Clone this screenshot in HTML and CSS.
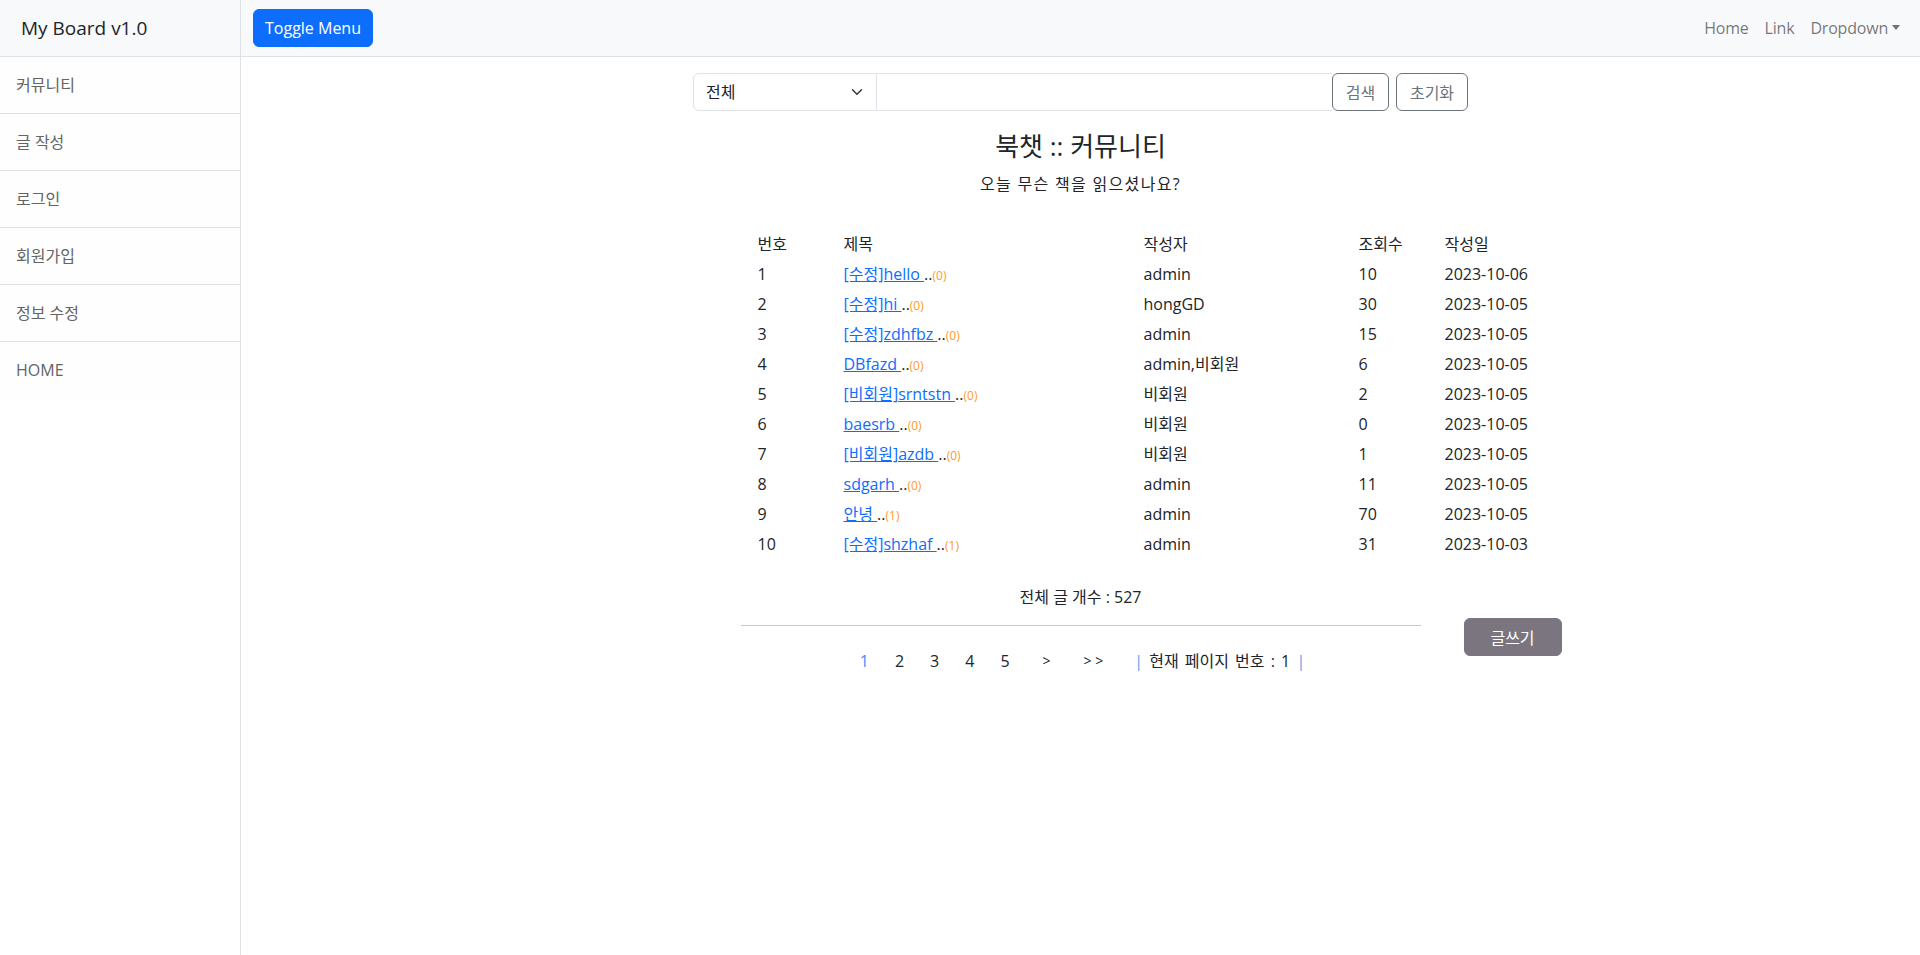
FILE: index.html
```html
<!DOCTYPE html>
<html lang="ko">
<head>
<meta charset="utf-8">
<title>My Board v1.0</title>
<link rel="stylesheet" href="styles.css">
</head>
<body>
<div class="wrapper">
  <aside class="sidebar">
    <div class="sidebar-heading">My Board v1.0</div>
    <div class="list-group">
      <a class="list-item" href="#">커뮤니티</a>
      <a class="list-item" href="#">글 작성</a>
      <a class="list-item" href="#">로그인</a>
      <a class="list-item" href="#">회원가입</a>
      <a class="list-item" href="#">정보 수정</a>
      <a class="list-item" href="#">HOME</a>
    </div>
  </aside>
  <div class="page">
    <nav class="navbar">
      <button class="btn-toggle" type="button">Toggle Menu</button>
      <ul class="nav">
        <li><a class="nav-link" href="#">Home</a></li>
        <li><a class="nav-link" href="#">Link</a></li>
        <li><a class="nav-link dropdown" href="#">Dropdown</a></li>
      </ul>
    </nav>
    <main class="content">
      <form class="search">
        <span class="select-wrap">
          <select class="select"><option>전체</option></select>
          <svg class="chevron" width="16" height="12" viewBox="0 0 16 16"><path d="m2 5 6 6 6-6" fill="none" stroke="#343a40" stroke-width="2" stroke-linecap="round" stroke-linejoin="round"/></svg>
        </span>
        <input class="keyword" type="text">
        <button class="btn-outline" type="button">검색</button>
        <button class="btn-outline reset" type="button">초기화</button>
      </form>
      <h3 class="title">북챗 :: 커뮤니티</h3>
      <p class="subtitle">오늘 무슨 책을 읽으셨나요?</p>
      <div class="board">
        <table class="table">
          <colgroup>
            <col class="c-no"><col class="c-title"><col class="c-writer"><col class="c-hit"><col class="c-date">
          </colgroup>
          <thead>
            <tr><th>번호</th><th>제목</th><th>작성자</th><th>조회수</th><th>작성일</th></tr>
          </thead>
          <tbody>
            <tr><td>1</td><td><a href="#">[수정]hello </a>..<span class="cnt">(0)</span></td><td>admin</td><td>10</td><td>2023-10-06</td></tr>
            <tr><td>2</td><td><a href="#">[수정]hi </a>..<span class="cnt">(0)</span></td><td>hongGD</td><td>30</td><td>2023-10-05</td></tr>
            <tr><td>3</td><td><a href="#">[수정]zdhfbz </a>..<span class="cnt">(0)</span></td><td>admin</td><td>15</td><td>2023-10-05</td></tr>
            <tr><td>4</td><td><a href="#">DBfazd </a>..<span class="cnt">(0)</span></td><td>admin,비회원</td><td>6</td><td>2023-10-05</td></tr>
            <tr><td>5</td><td><a href="#">[비회원]srntstn </a>..<span class="cnt">(0)</span></td><td>비회원</td><td>2</td><td>2023-10-05</td></tr>
            <tr><td>6</td><td><a href="#">baesrb </a>..<span class="cnt">(0)</span></td><td>비회원</td><td>0</td><td>2023-10-05</td></tr>
            <tr><td>7</td><td><a href="#">[비회원]azdb </a>..<span class="cnt">(0)</span></td><td>비회원</td><td>1</td><td>2023-10-05</td></tr>
            <tr><td>8</td><td><a href="#">sdgarh </a>..<span class="cnt">(0)</span></td><td>admin</td><td>11</td><td>2023-10-05</td></tr>
            <tr><td>9</td><td><a href="#">안녕 </a>..<span class="cnt">(1)</span></td><td>admin</td><td>70</td><td>2023-10-05</td></tr>
            <tr><td>10</td><td><a href="#">[수정]shzhaf </a>..<span class="cnt">(1)</span></td><td>admin</td><td>31</td><td>2023-10-03</td></tr>
          </tbody>
        </table>
        <p class="total">전체 글 개수 : 527</p>
      </div>
      <div class="footer-row">
        <div class="footer-mid">
          <hr class="divider">
          <div class="pagination">
            <a class="page-num current" href="#">1</a>
            <a class="page-num" href="#">2</a>
            <a class="page-num" href="#">3</a>
            <a class="page-num" href="#">4</a>
            <a class="page-num" href="#">5</a>
            <a class="page-arrow" href="#">&gt;</a>
            <a class="page-arrow" href="#">&gt; &gt;</a>
            <span class="page-status"><span class="bar">|</span> 현재 페이지 번호 : 1 <span class="bar">|</span></span>
          </div>
        </div>
        <div class="footer-side">
          <button class="btn-write" type="button">글쓰기</button>
        </div>
      </div>
    </main>
  </div>
</div>
</body>
</html>
```
FILE: styles.css
```css
* { box-sizing: border-box; }

html, body {
  margin: 0;
  padding: 0;
}

body {
  font-family: "Open Sans", "Noto Sans CJK KR", sans-serif;
  font-size: 16px;
  line-height: 1.5;
  color: #212529;
  background: #fff;
}

.wrapper {
  display: flex;
  min-height: 955px;
}

/* Sidebar */
.sidebar {
  width: 241px;
  flex: 0 0 241px;
  border-right: 1px solid #dee2e6;
  background: #fff;
}

.sidebar-heading {
  height: 57px;
  padding: 0 21px;
  display: flex;
  align-items: center;
  font-size: 19px;
  background: #f8f9fa;
  border-bottom: 1px solid #dee2e6;
  color: #212529;
}

.list-group {
  display: flex;
  flex-direction: column;
}

.list-item {
  display: block;
  height: 57px;
  padding: 16px 16px;
  line-height: 24px;
  color: #636464;
  background: #fefefe;
  text-decoration: none;
  border-bottom: 1px solid #dfdfdf;
}

.list-item:last-child {
  border-bottom: none;
}

/* Page */
.page {
  flex: 1;
  min-width: 0;
}

.navbar {
  height: 57px;
  display: flex;
  align-items: center;
  padding: 0 12px;
  background: #f8f9fa;
  border-bottom: 1px solid #dee2e6;
}

.btn-toggle {
  height: 38px;
  width: 120px;
  font-family: inherit;
  font-size: 16px;
  color: #fff;
  background: #0d6efd;
  border: 1px solid #0d6efd;
  border-radius: 6px;
  padding: 0;
  margin-top: -1px;
}

.nav {
  margin: 0 0 0 auto;
  padding: 0;
  list-style: none;
  display: flex;
}

.nav-link {
  display: block;
  padding: 8px 8px;
  color: rgba(0, 0, 0, 0.55);
  text-decoration: none;
  letter-spacing: -0.2px;
}

.dropdown::after {
  content: "";
  display: inline-block;
  margin-left: 4px;
  vertical-align: 4px;
  border-top: 5px solid;
  border-left: 4.5px solid transparent;
  border-right: 4.5px solid transparent;
}

/* Content */
.content {
  padding: 16px 12px 40px;
}

.search {
  display: flex;
  justify-content: center;
  height: 38px;
}

.select-wrap {
  position: relative;
  width: 184px;
  height: 38px;
}

.select {
  width: 100%;
  height: 100%;
  appearance: none;
  -webkit-appearance: none;
  font-family: inherit;
  font-size: 16px;
  color: #212529;
  background: #fff;
  border: 1px solid #dee2e6;
  border-radius: 6px 0 0 6px;
  padding: 0 36px 0 12px;
}

.chevron {
  position: absolute;
  right: 12px;
  top: 13px;
  pointer-events: none;
}

.keyword {
  width: 455px;
  height: 38px;
  border: 1px solid #dee2e6;
  border-left: none;
  border-right: none;
  padding: 0 12px;
  font-family: inherit;
  font-size: 16px;
  outline: none;
}

.btn-outline {
  height: 38px;
  width: 57px;
  padding: 0;
  font-family: inherit;
  font-size: 16px;
  color: #6c757d;
  background: #fff;
  border: 1px solid #6c757d;
  border-radius: 6px;
}

.btn-outline.reset {
  width: 72px;
  margin-left: 7px;
}

.title {
  margin: 20px 0 0;
  text-align: center;
  font-size: 26px;
  font-weight: 400;
  line-height: 1.2;
}

.subtitle {
  margin: 10px 0 0;
  text-align: center;
  line-height: 24px;
  letter-spacing: 1.3px;
}

.board {
  width: 680px;
  margin: 33px auto 0;
}

.table {
  margin-left: 9px;
  width: 790px;
  table-layout: fixed;
  border-collapse: collapse;
}

.c-no { width: 86px; }
.c-title { width: 300px; }
.c-writer { width: 215px; }
.c-hit { width: 86px; }
.c-date { width: 103px; }

.table th,
.table td {
  height: 30px;
  padding: 3px 8px;
  text-align: left;
  font-weight: 400;
  line-height: 24px;
  white-space: nowrap;
  vertical-align: middle;
}

.table a {
  color: #0d6efd;
  text-decoration: underline;
  white-space: pre;
}

.cnt {
  color: #ff9a1f;
  font-size: 12px;
  line-height: 1;
}

.total {
  margin: 26px 0 0;
  text-align: center;
  line-height: 24px;
}

.footer-row {
  display: grid;
  grid-template-columns: 1fr 680px 1fr;
  margin-top: 9px;
}

.footer-mid {
  grid-column: 2;
}

.divider {
  margin: 7px 0 0;
  border: none;
  border-top: 1px solid #c8c9ca;
}

.pagination {
  margin-top: 23px;
  display: flex;
  justify-content: center;
  line-height: 24px;
}

.page-num {
  margin: 0 13px;
  color: #212529;
  text-decoration: none;
}

.page-num.current {
  color: #3d8bfd;
}

.page-arrow {
  margin: 0 13px 0 20px;
  color: #212529;
  text-decoration: none;
  font-size: 14px;
}

.page-status {
  margin-left: 18px;
  padding-right: 9px;
  word-spacing: 2px;
}

.bar {
  color: #5aa0e6;
}

.footer-side {
  grid-column: 3;
}

.btn-write {
  margin-left: 43px;
  width: 98px;
  height: 38px;
  font-family: inherit;
  font-size: 16px;
  color: #fff;
  background: #7a757f;
  border: 1px solid #7a757f;
  border-radius: 6px;
}
```
